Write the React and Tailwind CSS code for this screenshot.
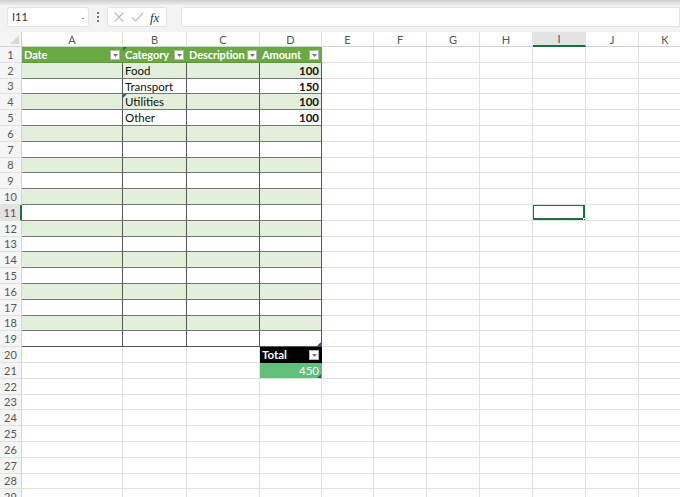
import React from 'react';

const COLS = [
  { key: 'A', w: 'w-[101px]' },
  { key: 'B', w: 'w-[64px]' },
  { key: 'C', w: 'w-[73px]' },
  { key: 'D', w: 'w-[62px]' },
  { key: 'E', w: 'w-[52px]' },
  { key: 'F', w: 'w-[53px]' },
  { key: 'G', w: 'w-[53px]' },
  { key: 'H', w: 'w-[53px]' },
  { key: 'I', w: 'w-[53px]' },
  { key: 'J', w: 'w-[53px]' },
  { key: 'K', w: 'w-[53px]' },
];

const HEADERS = ['Date', 'Category', 'Description', 'Amount'];

const ROWS = {
  2: ['', 'Food', '', '100'],
  3: ['', 'Transport', '', '150'],
  4: ['', 'Utilities', '', '100'],
  5: ['', 'Other', '', '100'],
};

// little filter button on table headers
const FilterBtn = () => (
  <span className="absolute right-[2px] top-[3px] w-[10px] h-[10px] flex items-center justify-center border bg-white border-[#b5b5b5]">
    <svg width="5" height="3" viewBox="0 0 5 3">
      <path d="M0 0 L5 0 L2.5 3 Z" fill="#777" />
    </svg>
  </span>
);

const Corner = () => (
  <span className="absolute right-0 bottom-0 w-0 h-0 border-l-[4px] border-l-transparent border-b-[4px] border-b-[#2f5597]" />
);

const ErrTri = () => (
  <span className="absolute left-0 top-0 w-0 h-0 border-r-[4px] border-r-transparent border-t-[4px] border-t-[#1e7b34]" />
);

function Cell({ r, c, w }) {
  const inTable = c < 4 && r >= 1 && r <= 19;
  const base = `relative ${w} h-full shrink-0 border-r border-b text-[11.5px] leading-[15px] px-[2px] overflow-hidden whitespace-nowrap`;

  if (r === 1 && inTable) {
    return (
      <div className={`${base} bg-[#6aa842] border-r-[#6aa842] border-b-[#5a9a35] text-white font-bold !text-[11px] tracking-[-0.1px]`}>
        {HEADERS[c]}
        {c === 1 && <ErrTri />}
        <FilterBtn />
      </div>
    );
  }
  if (inTable) {
    const band = r % 2 === 0 ? 'bg-[#e2efda]' : 'bg-white';
    const bottom = r === 19 ? 'border-b-[#555]' : 'border-b-[#777]';
    const val = ROWS[r] ? ROWS[r][c] : '';
    return (
      <div className={`${base} ${band} border-r-[#555] ${bottom} ${c === 3 ? 'text-right font-bold' : ''} text-[#111]`}>
        {val}
        {r === 4 && c === 1 && <ErrTri />}
        {r === 19 && c === 3 && <Corner />}
      </div>
    );
  }
  if (r === 20 && c === 3) {
    return (
      <div className={`${base} bg-black border-r-black border-b-black text-white font-bold`}>
        Total
        <FilterBtn />
      </div>
    );
  }
  if (r === 21 && c === 3) {
    return (
      <div className={`${base} bg-[#63be7b] border-r-[#63be7b] border-b-[#e1e1e1] text-white text-right`}>
        450
        <Corner />
      </div>
    );
  }
  if (r === 11 && c === 8) {
    return (
      <div className={`${base} border-r-[#e1e1e1] border-b-[#e1e1e1]`}>
        <span className="absolute -left-px -top-px right-0 bottom-0 border-2 border-[#1e6e3e]" />
        <span className="absolute right-[-2px] bottom-[-2px] w-[4px] h-[4px] bg-[#1e6e3e] border border-white" />
      </div>
    );
  }
  return <div className={`${base} border-r-[#e1e1e1] border-b-[#e1e1e1]`} />;
}

export default function App() {
  const rows = Array.from({ length: 29 }, (_, i) => i + 1);
  return (
    <div className="w-[680px] h-[497px] overflow-hidden bg-white" style={{ fontFamily: 'Lato, "Noto Sans", sans-serif' }}>
      {/* top strip */}
      <div className="h-[30px] bg-[#f3f3f3] relative">
        <div className="h-[5px] bg-gradient-to-b from-[#cfcfcf] to-[#ececec]" />
        <div className="flex items-center h-[22px] mt-[1px] pl-[7px]">
          <div className="w-[82px] h-[20px] bg-white rounded-[3px] border border-[#e3e3e3] flex items-center justify-between px-[4px] text-[11px] text-[#333]">
            <span>I11</span>
            <span className="text-[9px] text-[#666] leading-none">·</span>
          </div>
          <div className="w-[18px] flex flex-col items-center justify-center gap-[2px]">
            <span className="w-[2px] h-[2px] bg-[#444] rounded-full" />
            <span className="w-[2px] h-[2px] bg-[#444] rounded-full" />
            <span className="w-[2px] h-[2px] bg-[#444] rounded-full" />
          </div>
          <div className="w-[60px] h-[20px] bg-white rounded-[3px] border border-[#e3e3e3] flex items-center gap-[6px] px-[5px]">
            <svg width="12" height="12" viewBox="0 0 12 12">
              <path d="M1.5 1.5 L10.5 10.5 M10.5 1.5 L1.5 10.5" stroke="#bdbdbd" strokeWidth="1.1" />
            </svg>
            <svg width="13" height="12" viewBox="0 0 13 12">
              <path d="M1 6.5 L4.5 10 L12 2" stroke="#bdbdbd" strokeWidth="1.1" fill="none" />
            </svg>
            <span className="italic text-[13px] text-[#333] leading-none" style={{ fontFamily: '"Liberation Serif", serif' }}>
              fx
            </span>
          </div>
          <div className="ml-[14px] flex-1 h-[20px] bg-white rounded-l-[3px] border border-[#e3e3e3]" />
        </div>
      </div>
      <div className="h-[2px] bg-[#f3f3f3]" />
      {/* column headers */}
      <div className="flex h-[15px] bg-white">
        <div className="w-[22px] shrink-0 relative border-r border-b border-[#d4d4d4] bg-[#f5f5f5]">
          <span className="absolute right-[2px] bottom-[2px] w-0 h-0 border-l-[9px] border-l-transparent border-b-[9px] border-b-[#d8d8d8]" />
        </div>
        {COLS.map((col) => (
          <div
            key={col.key}
            className={`${col.w} shrink-0 flex items-center justify-center text-[11px] leading-none border-r border-[#e1e1e1] ${
              col.key === 'I' ? 'bg-[#e3e3e3] border-b-2 border-b-[#1e6e3e]' : 'bg-white border-b border-b-[#d4d4d4]'
            } text-[#555]`}
          >
            {col.key}
          </div>
        ))}
      </div>
      {rows.map((r) => (
        <div key={r} className="flex h-[15.8px]">
          <div
            className={`w-[22px] shrink-0 flex items-center justify-center text-[11px] leading-none border-b border-b-[#e1e1e1] ${
              r === 11 ? 'bg-[#e3e3e3] border-r-2 border-r-[#1e6e3e]' : 'bg-[#f5f5f5] border-r border-r-[#d4d4d4]'
            } text-[#555]`}
          >
            {r}
          </div>
          {COLS.map((col, c) => (
            <Cell key={col.key} r={r} c={c} w={col.w} />
          ))}
        </div>
      ))}
    </div>
  );
}
